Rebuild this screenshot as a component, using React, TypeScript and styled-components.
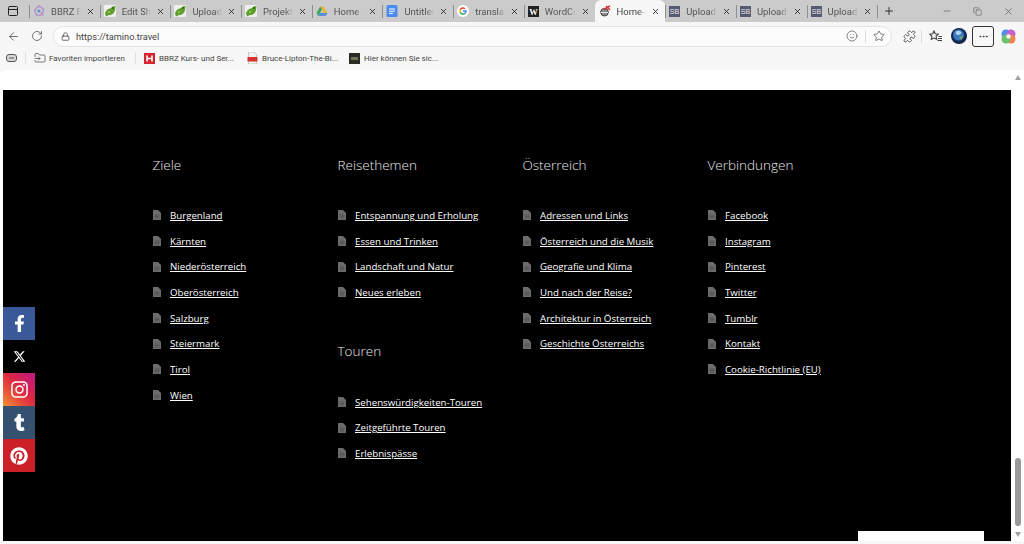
import React from 'react';
import styled, { createGlobalStyle } from 'styled-components';
import { ArrowLeft, RotateCw, Lock, Star, Plus, X, Minus, Copy, MoreHorizontal, Smile, Puzzle, PanelTop, FolderInput } from 'lucide-react';
import { FaFacebookF, FaInstagram, FaTumblr, FaPinterest } from 'react-icons/fa';
import { FaXTwitter } from 'react-icons/fa6';

const GlobalStyle = createGlobalStyle`
  html, body {
    margin: 0;
    padding: 0;
    width: 1024px;
    height: 544px;
    overflow: hidden;
    background: #f7f7f7;
    font-family: "Open Sans", "Liberation Sans", sans-serif;
  }
  * { box-sizing: border-box; }
`;

const Window = styled.div`
  width: 1024px;
  height: 544px;
  display: flex;
  flex-direction: column;
`;

const TabStrip = styled.div`
  height: 22px;
  background: #cbcbcb;
  display: flex;
  align-items: center;
`;

const WindowIcon = styled.div`
  width: 29px;
  display: flex;
  justify-content: center;
  padding-right: 3px;
  color: #222;
`;

const Tab = styled.div<{ $active?: boolean }>`
  width: 70.7px;
  height: 22px;
  padding: 0 5px 0 4px;
  display: flex;
  align-items: center;
  gap: 6px;
  font-family: Roboto, "Liberation Sans", sans-serif;
  font-size: 9.5px;
  white-space: nowrap;
  background: ${p => (p.$active ? '#f7f7f7' : 'transparent')};
  border-radius: ${p => (p.$active ? '6px 6px 0 0' : '0')};
  position: relative;
  color: ${p => (p.$active ? '#444' : '#555')};
  &::before {
    content: '';
    position: absolute;
    left: 0;
    top: 5px;
    height: 13px;
    width: 1px;
    background: ${p => (p.$active ? 'transparent' : '#8f8f8f')};
  }
`;

const TabTitle = styled.span`
  flex: 1;
  overflow: hidden;
  min-width: 0;
  -webkit-mask-image: linear-gradient(90deg, #000 75%, transparent 100%);
  mask-image: linear-gradient(90deg, #000 75%, transparent 100%);
`;

const TabClose = styled.span`
  display: flex;
  color: #222;
  margin-left: -1px;
`;

const NewTab = styled.div`
  width: 22px;
  display: flex;
  justify-content: center;
  border-left: 1px solid #8f8f8f;
  height: 13px;
  align-items: center;
  color: #333;
`;

const WindowControls = styled.div`
  margin-left: auto;
  display: flex;
  align-items: center;
  width: 82px;
  color: #555;
  justify-content: space-between;
  padding-right: 10px;
`;

const Toolbar = styled.div`
  height: 28px;
  display: flex;
  align-items: center;
  padding: 0 0 0 1px;
  background: #f7f7f7;
`;

const NavButton = styled.div`
  width: 24px;
  display: flex;
  justify-content: center;
  color: #555;
  flex: none;
`;

const AddressBar = styled.div`
  width: 839px;
  height: 21px;
  margin-left: 4px;
  border: 1px solid #e4e4e4;
  border-radius: 11px;
  background: #fcfcfc;
  display: flex;
  align-items: center;
  padding: 0 6px 0 7px;
  gap: 7px;
  font-family: Roboto, "Liberation Sans", sans-serif;
  font-size: 9.2px;
  color: #444;
  flex: none;
`;

const Url = styled.span`
  flex: 1;
  margin-left: -1px;
`;

const BarDivider = styled.span`
  width: 1px;
  height: 13px;
  background: #ddd;
`;

const ToolIcons = styled.div`
  display: flex;
  align-items: center;
  padding-left: 5px;
  color: #444;
`;

const ToolSlot = styled.div<{ $width: number }>`
  width: ${p => p.$width}px;
  display: flex;
  justify-content: center;
  align-items: center;
`;

const MenuButton = styled.div`
  width: 22px;
  height: 21px;
  border: 1px solid #333;
  border-radius: 3px;
  display: flex;
  align-items: center;
  justify-content: center;
  color: #333;
`;

const Bookmarks = styled.div`
  height: 20px;
  padding: 0 0 4px 6px;
  display: flex;
  align-items: center;
  background: #f7f7f7;
  font-family: Roboto, "Liberation Sans", sans-serif;
  font-size: 8px;
  color: #444;
`;

const BookmarkItem = styled.div<{ $width: number; $gap?: number }>`
  width: ${p => p.$width}px;
  display: flex;
  align-items: center;
  gap: ${p => p.$gap ?? 4}px;
  white-space: nowrap;
  flex: none;
`;

const BookmarkDivider = styled.span`
  width: 1px;
  height: 12px;
  background: #e0e0e0;
  margin: 0 8px;
  flex: none;
`;

const Viewport = styled.div`
  flex: 1;
  display: flex;
  background: #f7f7f7;
  padding-bottom: 3px;
  min-height: 0;
`;

const Page = styled.div`
  flex: 1;
  display: flex;
  background: #fff;
  padding-left: 3px;
  border-radius: 6px 0 0 0;
  min-height: 0;
`;

const PageBody = styled.div`
  flex: 1;
  display: flex;
  flex-direction: column;
  position: relative;
`;

const TopGap = styled.div`
  height: 20px;
  background: #fff;
`;

const Footer = styled.footer`
  flex: 1;
  background: #000;
  padding: 64.5px 0 0 149.5px;
  display: grid;
  grid-template-columns: repeat(4, 185px);
  align-content: start;
`;

const Column = styled.div`
  display: flex;
  flex-direction: column;
`;

const Heading = styled.h3<{ $spaced?: boolean }>`
  margin: ${p => (p.$spaced ? '36px 0 0' : '0')};
  font-size: 13.5px;
  line-height: 20px;
  font-weight: 300;
  color: #e8e8e8;
`;

const LinkList = styled.ul`
  margin: 28px 0 0;
  padding: 0;
  list-style: none;
  display: flex;
  flex-direction: column;
`;

const LinkRow = styled.li`
  height: 25.7px;
  display: flex;
  align-items: center;
  gap: 9.5px;
  color: #6c6c6c;
`;

const FooterLink = styled.a`
  font-size: 9.7px;
  color: #fff;
  text-decoration: underline;
  text-underline-offset: 1px;
  white-space: nowrap;
`;

const SocialRail = styled.div`
  position: absolute;
  left: 0;
  top: 237px;
  display: flex;
  flex-direction: column;
`;

const SocialButton = styled.div<{ $bg: string }>`
  width: 32px;
  height: 33px;
  display: flex;
  align-items: center;
  justify-content: center;
  color: #fff;
  background: ${p => p.$bg};
`;

const BottomBox = styled.div`
  position: absolute;
  left: 855px;
  bottom: 0;
  width: 126px;
  height: 10px;
  background: #fff;
`;

const Scrollbar = styled.div`
  width: 13px;
  flex: none;
  background: #fff;
  display: flex;
  flex-direction: column;
  align-items: center;
  padding: 5px 0 4px;
`;

const ScrollTrack = styled.div`
  flex: 1;
  display: flex;
  align-items: flex-end;
  padding-bottom: 6.5px;
`;

const ScrollThumb = styled.div`
  width: 6px;
  height: 68px;
  border-radius: 3px;
  background: #9a9a9a;
`;

const Arrow = styled.div<{ $up?: boolean }>`
  width: 0;
  height: 0;
  border-left: 3.5px solid transparent;
  border-right: 3.5px solid transparent;
  ${p => (p.$up ? 'border-bottom: 5px solid #a0a0a0;' : 'border-top: 5px solid #a0a0a0;')}
`;

const Frog = () => (
  <svg width="12" height="12" viewBox="0 0 12 12">
    <rect width="12" height="12" rx="1" fill="#efefef" />
    <path d="M1 8.5C1.5 5.5 4 3.5 7 3L9 1.2 11.5 1 11 5C10.5 8 8 10 5 10L2 11.5z" fill="#5f9f2c" />
    <circle cx="8.8" cy="3" r="1" fill="#2f5f16" />
    <circle cx="5" cy="7" r="1.2" fill="#8cc04c" />
  </svg>
);

const SbIcon = () => (
  <svg width="11" height="11" viewBox="0 0 11 11">
    <rect width="11" height="11" fill="#565a70" />
    <text x="5.5" y="8" fontSize="7" textAnchor="middle" fill="#e6e6ee" fontFamily="Liberation Sans">SB</text>
  </svg>
);

const tabIcons: Record<string, React.ReactNode> = {
  bbrz: (
    <svg width="12" height="12" viewBox="0 0 12 12">
      <path d="M6 1 L10.5 4 L9.5 10 L3.5 10.5 L1.5 5 Z" fill="none" stroke="#a688cf" strokeWidth="1.5" strokeDasharray="2 0.6" />
      <circle cx="6" cy="6" r="1.6" fill="#5a8fd8" />
      <circle cx="8.5" cy="8.5" r="1" fill="#d87ab0" />
    </svg>
  ),
  frog: <Frog />,
  drive: (
    <svg width="12" height="12" viewBox="0 0 12 12">
      <path d="M4.2 1.5h3.6L11.5 8H7.9z" fill="#e5b93c" />
      <path d="M4.2 1.5L.5 8l1.8 3 3.7-6.4z" fill="#3fa45b" />
      <path d="M2.3 11h7.4l1.8-3H4.1z" fill="#5a8fe0" />
    </svg>
  ),
  docs: (
    <svg width="12" height="12" viewBox="0 0 12 12">
      <rect x="0.5" width="11" height="12" rx="1.5" fill="#4a8bf0" />
      <path d="M3 4h6M3 6.2h6M3 8.4h4" stroke="#fff" strokeWidth="1" />
    </svg>
  ),
  google: (
    <svg width="12" height="12" viewBox="0 0 12 12">
      <circle cx="6" cy="6" r="6" fill="#fff" />
      <path d="M3.2 4.8A3 3 0 0 1 8 3.8" stroke="#ea4335" strokeWidth="1.5" fill="none" />
      <path d="M3.2 7.2a3 3 0 0 1 0-2.4" stroke="#fbbc05" strokeWidth="1.5" fill="none" />
      <path d="M8 8.2a3 3 0 0 1-4.8-1" stroke="#34a853" strokeWidth="1.5" fill="none" />
      <path d="M6 6h3a3 3 0 0 1-1 2.2" stroke="#4285f4" strokeWidth="1.5" fill="none" />
    </svg>
  ),
  word: (
    <svg width="11" height="11" viewBox="0 0 11 11">
      <rect width="11" height="11" fill="#222" />
      <text x="5.5" y="8.6" fontSize="8.5" fontWeight="700" textAnchor="middle" fill="#fff" fontFamily="Liberation Serif">W</text>
    </svg>
  ),
  home: (
    <svg width="12" height="12" viewBox="0 0 12 12">
      <circle cx="5.5" cy="7.2" r="3.8" fill="#8a8a8a" stroke="#444" strokeWidth="1" />
      <path d="M2 7.5h7" stroke="#e8e8e8" strokeWidth="1" />
      <path d="M5 4.5L11 .8M7 1l4 4" stroke="#dc2d35" strokeWidth="1.5" />
    </svg>
  ),
  sb: <SbIcon />,
};

const tabs = [
  { icon: 'bbrz', title: 'BBRZ Re' },
  { icon: 'frog', title: 'Edit Sho' },
  { icon: 'frog', title: 'Upload I' },
  { icon: 'frog', title: 'Projekte' },
  { icon: 'drive', title: 'Home -' },
  { icon: 'docs', title: 'Untitled' },
  { icon: 'google', title: 'translate' },
  { icon: 'word', title: 'WordCo' },
  { icon: 'home', title: 'Home-d', active: true },
  { icon: 'sb', title: 'Upload' },
  { icon: 'sb', title: 'Upload' },
  { icon: 'sb', title: 'Upload' },
];

const columns: { heading: string; links: string[] }[][] = [
  [{ heading: 'Ziele', links: ['Burgenland', 'Kärnten', 'Niederösterreich', 'Oberösterreich', 'Salzburg', 'Steiermark', 'Tirol', 'Wien'] }],
  [
    { heading: 'Reisethemen', links: ['Entspannung und Erholung', 'Essen und Trinken', 'Landschaft und Natur', 'Neues erleben'] },
    { heading: 'Touren', links: ['Sehenswürdigkeiten-Touren', 'Zeitgeführte Touren', 'Erlebnispässe'] },
  ],
  [{ heading: 'Österreich', links: ['Adressen und Links', 'Österreich und die Musik', 'Geografie und Klima', 'Und nach der Reise?', 'Architektur in Österreich', 'Geschichte Österreichs'] }],
  [{ heading: 'Verbindungen', links: ['Facebook', 'Instagram', 'Pinterest', 'Twitter', 'Tumblr', 'Kontakt', 'Cookie-Richtlinie (EU)'] }],
];

const PageIcon = () => (
  <svg width="8" height="10" viewBox="0 0 8 10" fill="currentColor">
    <path d="M0 0h5l3 3v7H0z" />
    <path d="M1.5 5h5M1.5 6.5h5M1.5 8h5" stroke="#333" strokeWidth="0.4" />
  </svg>
);

const App: React.FC = () => (
  <Window>
    <GlobalStyle />
    <TabStrip>
      <WindowIcon><PanelTop size={12} /></WindowIcon>
      {tabs.map((tab, index) => (
        <Tab key={index} $active={tab.active}>
          {tabIcons[tab.icon]}
          <TabTitle>{tab.title}</TabTitle>
          <TabClose><X size={9} strokeWidth={2.2} /></TabClose>
        </Tab>
      ))}
      <NewTab><Plus size={12} /></NewTab>
      <WindowControls>
        <Minus size={10} strokeWidth={1.5} />
        <Copy size={9} strokeWidth={1.5} />
        <X size={11} strokeWidth={1.5} />
      </WindowControls>
    </TabStrip>
    <Toolbar>
      <NavButton><ArrowLeft size={13} strokeWidth={1.6} /></NavButton>
      <NavButton><RotateCw size={12} strokeWidth={1.6} /></NavButton>
      <AddressBar>
        <Lock size={9} />
        <Url>https://tamino.travel</Url>
        <Smile size={12} strokeWidth={1.3} />
        <BarDivider />
        <Star size={12} strokeWidth={1.4} />
      </AddressBar>
      <ToolIcons>
        <ToolSlot $width={24}><Puzzle size={13} strokeWidth={1.6} /></ToolSlot>
        <BarDivider />
        <ToolSlot $width={26}>
          <svg width="13" height="12" viewBox="0 0 13 12" fill="none" stroke="currentColor" strokeWidth="1.1">
            <path d="M5 1l1.3 2.8 3 .4-2.2 2.1.6 3L5 8l-2.7 1.3.6-3L.7 4.2l3-.4z" />
            <path d="M9.5 6.5H13M9 8.5h4M8.5 10.5H13" />
          </svg>
        </ToolSlot>
        <ToolSlot $width={22}>
          <svg width="16" height="16" viewBox="0 0 16 16">
            <circle cx="8" cy="8" r="8" fill="#15284d" />
            <circle cx="7.5" cy="7" r="5.5" fill="#3b78c4" />
            <path d="M5 3.5c2-1 4-.8 5 .5s-1 3-3 3-3-2-2-3.5z" fill="#a8d4ee" />
            <path d="M8 9l4-1-1.5 4z" fill="#7cae4e" />
          </svg>
        </ToolSlot>
        <ToolSlot $width={26}><MenuButton><MoreHorizontal size={11} /></MenuButton></ToolSlot>
        <ToolSlot $width={24}>
          <svg width="15" height="15" viewBox="0 0 15 15">
            <circle cx="5" cy="5" r="4.5" fill="#4a8ef0" />
            <circle cx="10" cy="5" r="4.5" fill="#c65fd0" />
            <circle cx="10" cy="10" r="4.5" fill="#f0824a" />
            <circle cx="5" cy="10" r="4.5" fill="#6cc26a" />
            <circle cx="7.5" cy="7.5" r="2.2" fill="#f7f7f7" />
          </svg>
        </ToolSlot>
      </ToolIcons>
    </Toolbar>
    <Bookmarks>
      <svg width="11" height="9" viewBox="0 0 11 9">
        <rect x="0.5" y="0.5" width="10" height="7" rx="2.5" fill="#d8d8d8" stroke="#555" strokeWidth="1" />
        <path d="M3 4h5" stroke="#555" strokeWidth="1" />
      </svg>
      <BookmarkDivider />
      <BookmarkItem $width={93} $gap={3}><FolderInput size={12} strokeWidth={1.4} />Favoriten importieren</BookmarkItem>
      <BookmarkDivider />
      <BookmarkItem $width={103}>
        <svg width="11" height="11" viewBox="0 0 11 11">
          <rect width="11" height="11" fill="#d6232f" />
          <path d="M3 2.5v6M8 2.5v6M3 5.5h5" stroke="#fff" strokeWidth="1.6" />
        </svg>
        BBRZ Kurs- und Ser...
      </BookmarkItem>
      <BookmarkItem $width={102}>
        <svg width="11" height="12" viewBox="0 0 11 12">
          <path d="M1.5 0h5.500L9.500 2.500V12h-8z" fill="#f3f3f3" stroke="#999" strokeWidth="0.5" />
          <rect x="0.5" y="5" width="10" height="4.5" fill="#d6332f" />
        </svg>
        Bruce-Lipton-The-Bi...
      </BookmarkItem>
      <BookmarkItem $width={100}>
        <svg width="11" height="11" viewBox="0 0 11 11">
          <rect width="11" height="11" fill="#2b2b24" />
          <rect x="2" y="4" width="7" height="3" fill="#77735a" />
        </svg>
        Hier können Sie sic...
      </BookmarkItem>
    </Bookmarks>
    <Viewport>
      <Page>
        <PageBody>
          <TopGap />
          <Footer>
            {columns.map((sections, columnIndex) => (
              <Column key={columnIndex}>
                {sections.map((section, sectionIndex) => (
                  <React.Fragment key={section.heading}>
                    <Heading $spaced={sectionIndex > 0}>{section.heading}</Heading>
                    <LinkList>
                      {section.links.map(link => (
                        <LinkRow key={link}>
                          <PageIcon />
                          <FooterLink>{link}</FooterLink>
                        </LinkRow>
                      ))}
                    </LinkList>
                  </React.Fragment>
                ))}
              </Column>
            ))}
          </Footer>
          <SocialRail>
            <SocialButton $bg="#3b5998"><FaFacebookF size={17} /></SocialButton>
            <SocialButton $bg="#000"><FaXTwitter size={13} /></SocialButton>
            <SocialButton $bg="linear-gradient(45deg, #f09433 0%, #e6483c 35%, #dc2743 55%, #bc1888 100%)"><FaInstagram size={19} /></SocialButton>
            <SocialButton $bg="#34526f"><FaTumblr size={17} /></SocialButton>
            <SocialButton $bg="#cb2027"><FaPinterest size={18} /></SocialButton>
          </SocialRail>
          <BottomBox />
        </PageBody>
        <Scrollbar>
          <Arrow $up />
          <ScrollTrack><ScrollThumb /></ScrollTrack>
          <Arrow />
        </Scrollbar>
      </Page>
    </Viewport>
  </Window>
);

export default App;
